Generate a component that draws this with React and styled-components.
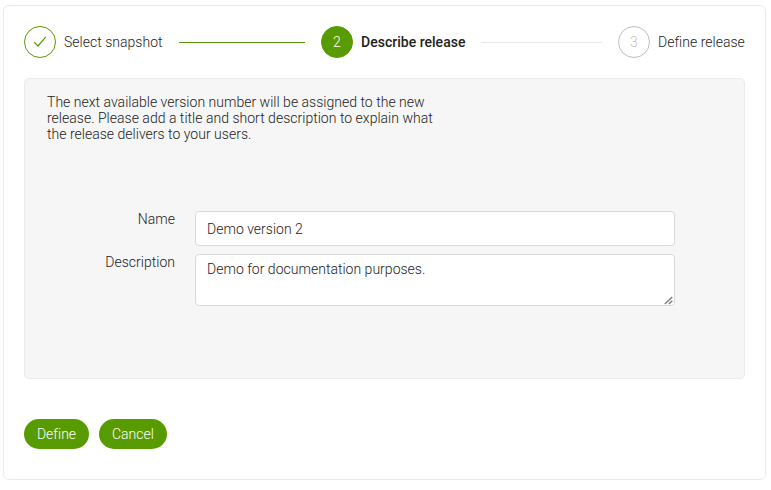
import React from "react";
import styled, { createGlobalStyle } from "styled-components";

const GlobalStyle = createGlobalStyle`
  *, *::before, *::after { box-sizing: border-box; }
  body {
    margin: 0;
    background: #fff;
    color: #222;
    font: 300 14px/16px Roboto, "Liberation Sans", sans-serif;
    letter-spacing: 0.018px;
  }
`;

const Card = styled.main`
  width: 763px;
  height: 475px;
  margin: 5px 0 0 3px;
  padding: 20px;
  border: 1px solid #ebebeb;
  border-radius: 6px;
`;

const Stepper = styled.ol`
  display: flex;
  align-items: center;
  height: 32px;
  margin: 0;
  padding: 0;
  list-style: none;
`;

const Step = styled.li`
  display: flex;
  align-items: center;
  gap: 8px;
  white-space: nowrap;
  width: ${({ $width }) => $width}px;
`;

const StepCircle = styled.span`
  display: flex;
  align-items: center;
  justify-content: center;
  flex: none;
  width: 32px;
  height: 32px;
  border: 1px solid ${({ $state }) => ($state === "next" ? "#bfbfbf" : "#589b00")};
  border-radius: 50%;
  background: ${({ $state }) => ($state === "current" ? "#589b00" : "#fff")};
  color: ${({ $state }) => ($state === "current" ? "#fff" : "#bfbfbf")};
`;

const StepTitle = styled.span`
  font-weight: ${({ $current }) => ($current ? 500 : 300)};
`;

const Connector = styled.li`
  flex: ${({ $done }) => ($done ? 126 : 121)} 1 0;
  height: 1px;
  margin: 0 16px;
  background: ${({ $done }) => ($done ? "#589b00" : "#e8e8e8")};
`;

const Panel = styled.section`
  height: 301px;
  margin-top: 20px;
  padding: 15px 22px;
  border: 1px solid #ebebeb;
  border-radius: 5px;
  background: #f6f6f6;
`;

const Intro = styled.p`
  width: 400px;
  margin: 0 0 69px;
`;

const Form = styled.form`
  display: grid;
  grid-template-columns: 128px 480px;
  column-gap: 20px;
  row-gap: 8px;
`;

const Label = styled.label`
  text-align: right;
`;

const Input = styled.input`
  width: 100%;
  height: 35px;
  padding: 0 11px;
  border: 1px solid #d9d9d9;
  border-radius: 4px;
  background: #fff;
  color: inherit;
  font: inherit;
  letter-spacing: inherit;
  outline: 0;
`;

const TextAreaWrap = styled.div`
  position: relative;
`;

const TextArea = styled.textarea`
  display: block;
  width: 100%;
  height: 52px;
  padding: 6px 11px;
  border: 1px solid #d9d9d9;
  border-radius: 4px;
  background: #fff;
  color: inherit;
  font: inherit;
  letter-spacing: inherit;
  outline: 0;
  resize: none;
`;

const ResizeGrip = styled.svg`
  position: absolute;
  right: 1px;
  bottom: 1px;
  pointer-events: none;
`;

const Actions = styled.div`
  display: flex;
  gap: 10px;
  margin-top: 40px;
`;

const Button = styled.button`
  width: ${({ $width }) => $width}px;
  height: 30px;
  padding: 0;
  border: 0;
  border-radius: 15px;
  background: #589b00;
  color: #fff;
  font: inherit;
  letter-spacing: inherit;
`;

const CheckIcon = () => (
  <svg width="14" height="14" viewBox="0 0 14 14" fill="none" stroke="#589b00" strokeWidth="1.2">
    <path d="M1.1 7.1 5 11 12.8 1.9" />
  </svg>
);

export default function App() {
  return (
    <>
      <GlobalStyle />
      <Card>
        <Stepper>
          <Step $width={139}>
            <StepCircle $state="done"><CheckIcon /></StepCircle>
            <StepTitle>Select snapshot</StepTitle>
          </Step>
          <Connector $done />
          <Step $width={144}>
            <StepCircle $state="current">2</StepCircle>
            <StepTitle $current>Describe release</StepTitle>
          </Step>
          <Connector />
          <Step $width={127}>
            <StepCircle $state="next">3</StepCircle>
            <StepTitle>Define release</StepTitle>
          </Step>
        </Stepper>
        <Panel>
          <Intro>
            The next available version number will be assigned to the new
            <br />
            release. Please add a title and short description to explain what
            <br />
            the release delivers to your users.
          </Intro>
          <Form>
            <Label htmlFor="name">Name</Label>
            <Input id="name" defaultValue="Demo version 2" />
            <Label htmlFor="description">Description</Label>
            <TextAreaWrap>
              <TextArea id="description" defaultValue="Demo for documentation purposes." />
              <ResizeGrip width="10" height="9" viewBox="0 0 10 9" fill="none" stroke="#777" strokeWidth="1.3">
                <path d="M0.8 8 8.3 1M4.8 8l3.5-3.2" />
              </ResizeGrip>
            </TextAreaWrap>
          </Form>
        </Panel>
        <Actions>
          <Button $width={65}>Define</Button>
          <Button $width={68}>Cancel</Button>
        </Actions>
      </Card>
    </>
  );
}
